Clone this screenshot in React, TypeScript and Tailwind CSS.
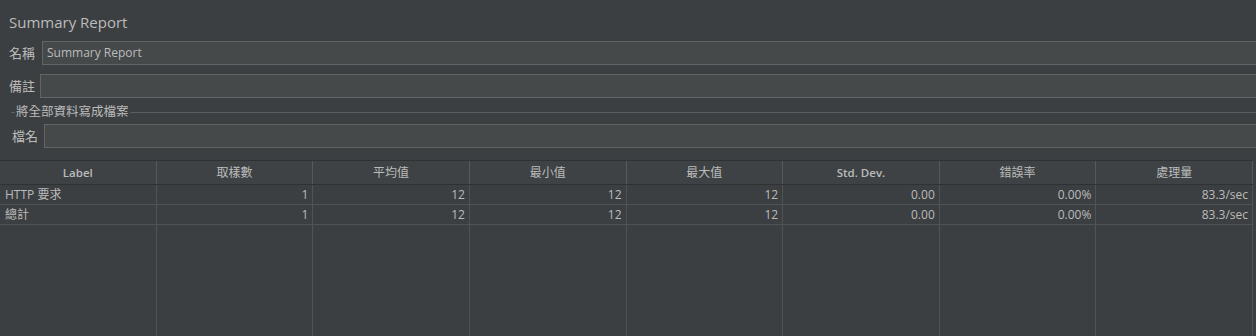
const font = {
  fontFamily: '"Open Sans", "Noto Sans CJK TC", "Noto Sans", sans-serif',
};

const headers = ["Label", "取樣數", "平均值", "最小值", "最大值", "Std. Dev.", "錯誤率", "處理量"];

const rows = [
  ["HTTP 要求", "1", "12", "12", "12", "0.00", "0.00%", "83.3/sec"],
  ["總計", "1", "12", "12", "12", "0.00", "0.00%", "83.3/sec"],
];

function Field({ label, value, inputLeft }: { label: string; value?: string; inputLeft: string }) {
  return (
    <div className="flex h-[24px] items-center">
      <span className={`${inputLeft} shrink-0 text-[13px] leading-none text-[#bbbbbb]`}>{label}</span>
      <div className="-mr-[10px] flex h-[24px] flex-1 items-center border border-[#646464] bg-[#45494a] pl-[4px] text-[12px] text-[#bbbbbb]">
        {value}
      </div>
    </div>
  );
}

export default function App() {
  return (
    <div
      className="flex h-[336px] w-[1256px] flex-col overflow-hidden bg-[#3c3f41] text-[#bbbbbb]"
      style={font}
    >
      <div className="pl-[9px] pt-[12px] text-[15px] leading-[20px] text-[#bbbbbb]">Summary Report</div>

      <div className="mt-[9px] pl-[9px]">
        <Field label="名稱" value="Summary Report" inputLeft="w-[33px]" />
      </div>
      <div className="mt-[9px] pl-[9px]">
        <Field label="備註" inputLeft="w-[31px]" />
      </div>

      <div className="mt-[6px] flex h-[16px] items-center pl-[11px]">
        <div className="h-px w-[4px] bg-[#5a5e60]" />
        <span className="px-[1px] text-[12.5px] leading-none text-[#bbbbbb]">將全部資料寫成檔案</span>
        <div className="h-px flex-1 bg-[#5a5e60]" />
      </div>
      <div className="mt-[4px] pl-[12px]">
        <Field label="檔名" inputLeft="w-[32px]" />
      </div>

      <div className="mt-[12px] flex w-[1253px] flex-1 flex-col">
        <div className="grid h-[25px] grid-cols-8 border-y border-[#2f3133] bg-[#3e4244]">
          {headers.map((h, i) => (
            <div
              key={h}
              className={`flex items-center justify-center border-r border-[#55595b] ${
                i === 0 || i === 5 ? "text-[11.5px] font-semibold" : "text-[12px]"
              } text-[#bbbbbb]`}
            >
              {h}
            </div>
          ))}
        </div>
        {rows.map((r, ri) => (
          <div key={ri} className="grid h-[20px] grid-cols-8 border-b border-[#4f5355]">
            {r.map((c, i) => (
              <div
                key={i}
                className={`flex items-center border-r border-[#4f5355] text-[12px] leading-none text-[#bbbbbb] ${
                  i === 0 ? "justify-start pl-[5px]" : "justify-end pr-[4px]"
                }`}
              >
                {c}
              </div>
            ))}
          </div>
        ))}
        <div className="grid flex-1 grid-cols-8">
          {headers.map((h) => (
            <div key={h} className="border-r border-[#4f5355]" />
          ))}
        </div>
      </div>
    </div>
  );
}
